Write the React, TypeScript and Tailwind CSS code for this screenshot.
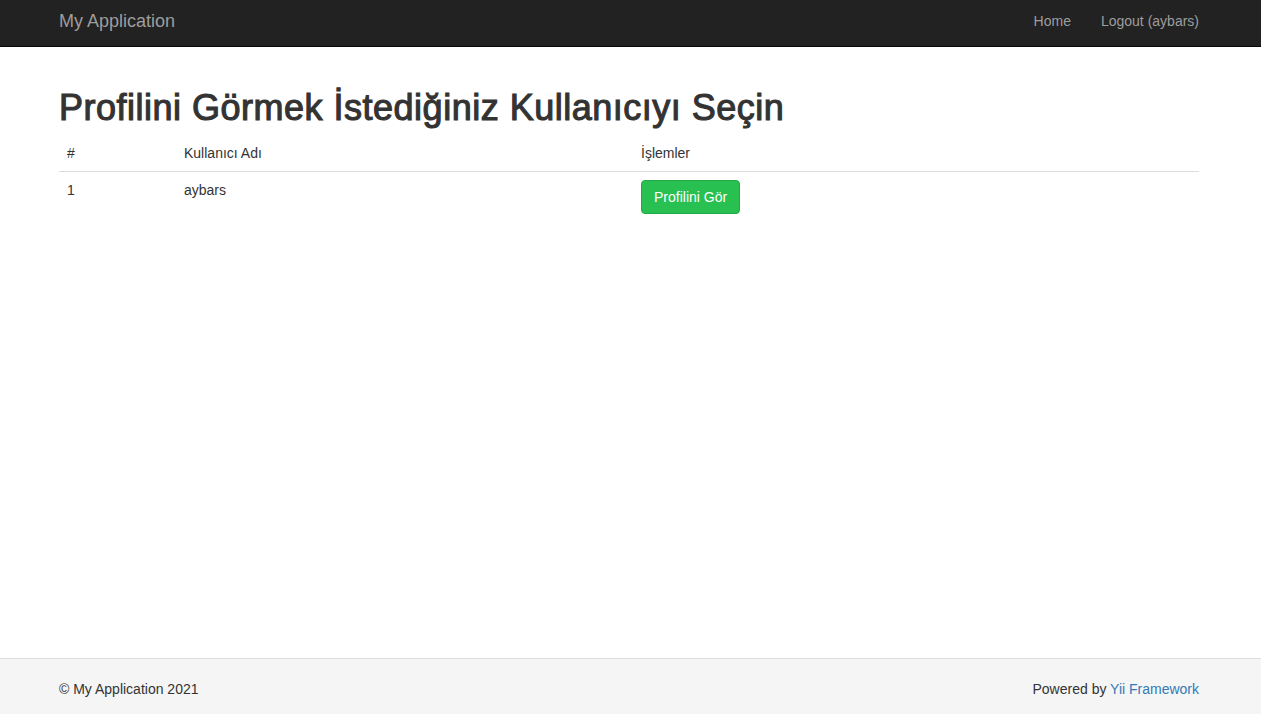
export default function App() {
  return (
    <div className="h-[714px] flex flex-col bg-white text-[#333] font-['Liberation_Sans',Arial,sans-serif] text-[14px] leading-[20px] overflow-hidden">
      {/* navbar */}
      <nav className="h-[47px] shrink-0 bg-[#222] border-b border-[#080808]">
        <div className="w-[1140px] ml-[59px] h-full flex items-center justify-between">
          <span className="text-[18px] text-[#9d9d9d] -mt-[4px]">My Application</span>
          <div className="flex gap-[30px] text-[#9d9d9d] -mt-[4px]">
            <span>Home</span>
            <span>Logout (aybars)</span>
          </div>
        </div>
      </nav>

      <main className="flex-1">
        <div className="w-[1140px] ml-[59px] pt-[41px]">
          <h1 className="text-[36px] leading-[40px] font-normal tracking-[0.5px] [-webkit-text-stroke:1.1px_#333] mb-[7px]">
            Profilini Görmek İstediğiniz Kullanıcıyı Seçin
          </h1>
          <table className="w-full border-collapse text-left">
            <thead>
              <tr className="border-b border-[#ddd]">
                <th className="w-[117px] p-[8px] font-normal">#</th>
                <th className="w-[457px] p-[8px] font-normal">Kullanıcı Adı</th>
                <th className="p-[8px] font-normal">İşlemler</th>
              </tr>
            </thead>
            <tbody>
              <tr>
                <td className="p-[8px] align-top">1</td>
                <td className="p-[8px] align-top">aybars</td>
                <td className="p-[8px] align-top">
                  <button className="h-[34px] px-[12px] rounded-[4px] bg-[#28c151] border border-[#20a945] text-white">
                    Profilini Gör
                  </button>
                </td>
              </tr>
            </tbody>
          </table>
        </div>
      </main>

      <footer className="h-[56px] shrink-0 bg-[#f5f5f5] border-t border-[#ddd] pt-[20px]">
        <div className="w-[1140px] ml-[59px] flex justify-between">
          <span>© My Application 2021</span>
          <span>
            Powered by <span className="text-[#337ab7]">Yii Framework</span>
          </span>
        </div>
      </footer>
    </div>
  );
}
